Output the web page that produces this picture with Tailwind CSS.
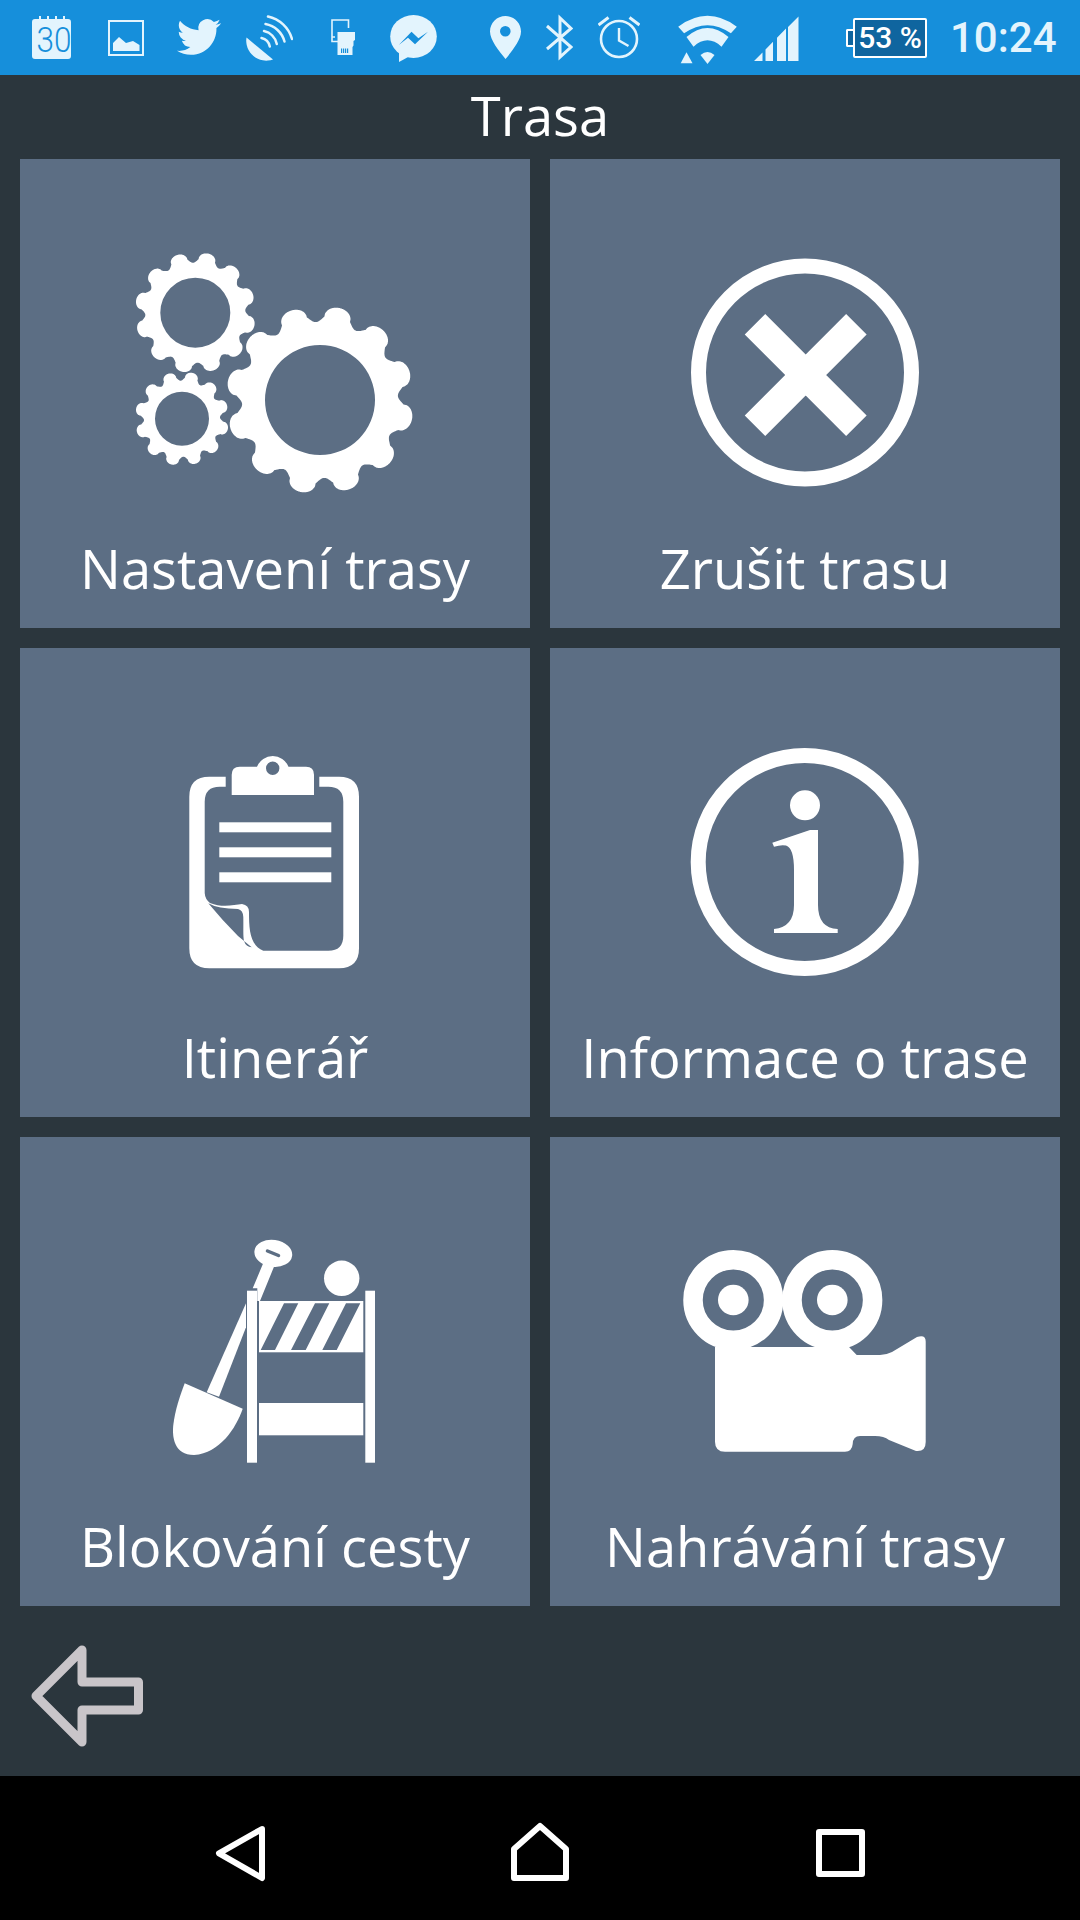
<!DOCTYPE html>
<html lang="cs">
<head>
  <meta charset="UTF-8" />
  <title>Trasa</title>
  <meta name="viewport" content="width=device-width, initial-scale=1.0" />
  <script src="https://cdn.jsdelivr.net/npm/@tailwindcss/browser@4"></script>
</head>
<body class="w-[1080px] h-[1920px] overflow-hidden flex flex-col bg-[#2b363d] text-white font-['Open_Sans',sans-serif]">

  <!-- status bar: svgs use page coordinates in their viewBox -->
  <header class="h-[75px] shrink-0 bg-[#168fdb] flex items-center pl-[32px] text-[#e3f4fd] fill-[#e3f4fd]">
    <svg class="w-[44px] h-[75px]" viewBox="32 0 44 75">
      <path d="M36 19h3v-3h2v3h6v-3h2v3h6v-3h2v3h6v-3h2v3h3q3 0 3 3v34q0 3-3 3H35q-3 0-3-3V22q0-3 3-3z" />
      <text x="54" y="52" text-anchor="middle" font-family="Roboto" font-weight="300" font-size="35" textLength="35" lengthAdjust="spacingAndGlyphs" fill="#168fdb">30</text>
    </svg>
    <svg class="w-[36px] h-[75px] ml-[32px]" viewBox="108 0 36 75">
      <rect x="109" y="21" width="34" height="34" fill="none" stroke="#e3f4fd" stroke-width="2" />
      <path d="M113 51V43L119 37L126 43L133 41L139.500 45V51Z" />
    </svg>
    <svg class="w-[44px] h-[75px] ml-[33px]" viewBox="177 0 44 75">
      <path transform="translate(177 15) scale(1.83)" d="M23.953 4.57a10 10 0 01-2.825.775 4.958 4.958 0 002.163-2.723c-.951.555-2.005.959-3.127 1.184a4.92 4.92 0 00-8.384 4.482C7.69 8.095 4.067 6.13 1.64 3.162a4.822 4.822 0 00-.666 2.475c0 1.71.87 3.213 2.188 4.096a4.904 4.904 0 01-2.228-.616v.06a4.923 4.923 0 003.946 4.827 4.996 4.996 0 01-2.212.085 4.936 4.936 0 004.604 3.417 9.867 9.867 0 01-6.102 2.105c-.39 0-.779-.023-1.17-.067a13.995 13.995 0 007.557 2.209c9.053 0 13.998-7.496 13.998-13.985 0-.21 0-.42-.015-.63A9.935 9.935 0 0024 4.59z" />
    </svg>
    <svg class="w-[47px] h-[75px] ml-[25px]" viewBox="246 0 47 75">
      <path d="M246.500 37.500A20 20 0 0 0 273 59.500Z" />
      <g fill="none" stroke="#e3f4fd" stroke-width="2.500" stroke-linecap="round">
        <path d="M261.500 38A11 11 0 0 1 269.800 46.500" />
        <path d="M264 31A17 17 0 0 1 276.800 44" />
        <path d="M265.500 24A24 24 0 0 1 284.500 41.500" />
        <path d="M268 16.500A32 32 0 0 1 292 39" />
      </g>
    </svg>
    <svg class="w-[24px] h-[75px] ml-[38px]" viewBox="331 0 24 75">
      <path d="M348.500 28V20H332V41.500H338M332 37H335" fill="none" stroke="#e3f4fd" stroke-width="1.600" />
      <path d="M337.500 32H355V40L353.500 41V45.500L352.500 47V55H337.500Z" />
      <path d="M341 48.500h1.200v4.500H341zM343 48.500h1.200v4.500H343zM345 48.500h1.200v4.500H345zM347 48.500h1.200v4.500H347z" fill="#168fdb" />
    </svg>
    <svg class="w-[47px] h-[75px] ml-[35px]" viewBox="390 0 47 75">
      <ellipse cx="413.500" cy="36.500" rx="23.300" ry="21.500" />
      <path d="M399 50V62L410 56Z" />
      <path d="M398.800 45L411.500 31.700L418.400 38.300L428 31.700L415 44.300L408 37.700Z" fill="#168fdb" />
    </svg>
    <svg class="w-[31px] h-[75px] ml-[53px]" viewBox="490 0 31 75">
      <path fill-rule="evenodd" d="M505.500 16C514 16 521 22.800 521 31.500C521 40 512 51 505.500 59C499 51 490 40 490 31.500C490 22.800 497 16 505.500 16ZM505.300 26A5.300 5.300 0 1 0 505.300 36.600A5.300 5.300 0 1 0 505.300 26Z" />
    </svg>
    <svg class="w-[28px] h-[75px] ml-[24px]" viewBox="545 0 28 75">
      <path d="M547 26L571 47L560 57V18L571 28.500L547 49" fill="none" stroke="#e3f4fd" stroke-width="3" />
    </svg>
    <svg class="w-[42px] h-[75px] ml-[25px]" viewBox="597.500 0 42 75">
      <g fill="none" stroke="#e3f4fd">
        <circle cx="618.500" cy="39" r="18" stroke-width="2.600" />
        <path d="M618.500 28V40.500L628 46" stroke-width="2.400" />
        <path d="M598 25L608 17.500M629 17.500L639 25" stroke-width="3" />
      </g>
    </svg>
    <svg class="w-[59px] h-[75px] ml-[38px]" viewBox="677.500 0 59 75">
      <path d="M677.700 26.700Q707 5 736.300 26.700L730.400 33.300Q707 17 683.600 33.300Z" />
      <path d="M686 37Q707 19 728 37L721 46.700Q707 34 693 46.700Z" />
      <path d="M700 55Q707 49 714 55L707 64Z" />
      <path d="M680.200 63.300H692L686 52.300Z" />
    </svg>
    <svg class="w-[45px] h-[75px] ml-[17px]" viewBox="753.500 0 45 75">
      <path d="M753.500 61L762 52.400V61ZM765 49.400L772.500 41.800V61H765ZM776.500 37.700L785.500 28.600V61H776.500ZM787.500 27L798 16.400V61H787.500Z" />
    </svg>
    <div class="relative ml-[54px] w-[74px] h-[40px] border-2 border-white rounded-[2px] bg-[#0f659f] flex items-center justify-center text-white font-['Roboto',sans-serif] font-medium text-[30px] leading-none whitespace-nowrap">
      53 %
      <div class="absolute left-[-9px] top-[9px] w-[7px] h-[18px] border-2 border-r-0 border-white rounded-l-[2px] bg-[#0f659f]"></div>
    </div>
    <div class="ml-[23px] font-['Roboto',sans-serif] text-[42px] leading-none font-medium whitespace-nowrap">10:24</div>
  </header>

  <h1 class="h-[84px] shrink-0 pb-[4px] flex items-center justify-center text-[54.300px] leading-none font-normal">Trasa</h1>

  <main class="grid grid-cols-2 gap-[20px] px-[20px]">
    <!-- Nastavení trasy -->
    <a class="h-[469px] bg-[#5c6e84] flex flex-col items-center">
      <svg class="w-[510px] h-[372px] fill-white" viewBox="20 159 510 372">
        <path fill-rule="evenodd" data-gear="320,400,78,94,55,12" />
        <path fill-rule="evenodd" data-gear="195.300,312.700,50,60.500,35,12.500" />
        <path fill-rule="evenodd" data-gear="182,418.700,38,47,27,13" />
      </svg>
      <span class="text-[54.300px] leading-[74px] whitespace-nowrap">Nastavení trasy</span>
    </a>
    <!-- Zrušit trasu -->
    <a class="h-[469px] bg-[#5c6e84] flex flex-col items-center">
      <svg class="w-[510px] h-[372px]" viewBox="550 159 510 372">
        <circle cx="805" cy="372.500" r="106.500" fill="none" stroke="#fff" stroke-width="15" />
        <path d="M755 324.300L856.400 425.700M856.400 324.300L755 425.700" stroke="#fff" stroke-width="29" />
      </svg>
      <span class="text-[54.300px] leading-[74px] whitespace-nowrap">Zrušit trasu</span>
    </a>
    <!-- Itinerář -->
    <a class="h-[469px] bg-[#5c6e84] flex flex-col items-center">
      <svg class="w-[510px] h-[372px] fill-white" viewBox="20 648 510 372">
        <path fill-rule="evenodd" d="M209.300 776.700H339Q359 776.700 359 796.700V948.300Q359 968.300 339 968.300H209.300Q189.300 968.300 189.300 948.300V796.700Q189.300 776.700 209.300 776.700ZM219.700 786.700Q204.700 786.700 204.700 801.700V893Q205 899 210 903C222 908 234 905 242 904Q249 905 249 912C249 930 250 945 263.300 950.700H328.300Q343.300 950.700 343.300 935.700V801.700Q343.300 786.700 328.300 786.700Z" />
        <path d="M208.300 903.300Q218 909 238 909Q243 910 243.300 917C243.500 930 243 935 244 941Q246 947 251.700 947.300Q244 941 238 936Q222 920 208.300 903.300Z" fill="#5c6e84" />
        <rect x="225.700" y="776" width="93.600" height="11" fill="#5c6e84" />
        <path fill-rule="evenodd" d="M239.700 766.700H257A17 17 0 0 1 288.500 766.700H306Q314 766.700 314 774.700V795H231.700V774.700Q231.700 766.700 239.700 766.700ZM272.700 761.500A6.700 6.700 0 1 0 272.700 774.900A6.700 6.700 0 1 0 272.700 761.500Z" />
        <rect x="219.300" y="822.300" width="112" height="10" />
        <rect x="219.300" y="847.300" width="112" height="10" />
        <rect x="219.300" y="872.300" width="112" height="10" />
      </svg>
      <span class="text-[54.300px] leading-[74px] whitespace-nowrap">Itinerář</span>
    </a>
    <!-- Informace o trase -->
    <a class="h-[469px] bg-[#5c6e84] flex flex-col items-center">
      <svg class="w-[510px] h-[372px] fill-white" viewBox="550 648 510 372">
        <circle cx="804.700" cy="862" r="106.500" fill="none" stroke="#fff" stroke-width="15" />
        <circle cx="805" cy="805.300" r="15" />
        <path d="M772.300 842.700L774 846.700Q781 844.500 786 845.500Q794 848 794 870V905Q794 927 774 929V933H837.700V929Q818 928 818 905V830H810Z" />
      </svg>
      <span class="text-[54.300px] leading-[74px] whitespace-nowrap">Informace o trase</span>
    </a>
    <!-- Blokování cesty -->
    <a class="h-[469px] bg-[#5c6e84] flex flex-col items-center">
      <svg class="w-[510px] h-[372px] fill-white" viewBox="20 1137 510 372">
        <rect x="247" y="1290.700" width="10" height="172" />
        <rect x="365.300" y="1290.700" width="9.700" height="172" />
        <rect x="259" y="1301" width="104.300" height="51.300" />
        <path d="M284 1303.300H298.300L275 1350H260.700ZM315 1303.300H329.300L305.700 1350H291ZM346 1303.300H360.300L336.700 1350H322.300Z" fill="#5c6e84" />
        <rect x="259" y="1403" width="104.300" height="32.300" />
        <circle cx="341.700" cy="1278.300" r="17.700" />
        <ellipse cx="273.300" cy="1253.300" rx="19" ry="13.500" transform="rotate(8 273.300 1253.300)" />
        <path d="M267.500 1251L278.500 1255.500" stroke="#5c6e84" stroke-width="3.500" stroke-linecap="round" />
        <path d="M263.300 1263L274 1266.700L260 1301H257.300V1288.300H252.700Z" />
        <path d="M246 1303.300V1327.300L219 1396.700L206.700 1392.300Z" />
        <path d="M184.700 1383.300L242.700 1408.700C236 1428 220 1453 194 1455C174 1455 172 1437 173.300 1425C175 1410 180 1396 184.700 1383.300Z" />
      </svg>
      <span class="text-[54.300px] leading-[74px] whitespace-nowrap">Blokování cesty</span>
    </a>
    <!-- Nahrávání trasy -->
    <a class="h-[469px] bg-[#5c6e84] flex flex-col items-center">
      <svg class="w-[510px] h-[372px] fill-white" viewBox="550 1137 510 372">
        <path d="M715 1347H849L856.700 1355H880Q886 1355 892 1352L917 1337Q926 1334 925.700 1342V1442Q925.700 1452 916 1451L889 1440Q884 1436 875 1436H860Q853 1436 852.700 1444Q852 1451.700 845 1451.700H725Q715 1451.700 715 1441.700Z" />
        <circle cx="733.300" cy="1300" r="40.300" fill="none" stroke="#fff" stroke-width="19.500" />
        <circle cx="733.300" cy="1300" r="15.300" />
        <circle cx="832.300" cy="1300" r="40.300" fill="none" stroke="#fff" stroke-width="19.500" />
        <circle cx="832.300" cy="1300" r="15.300" />
      </svg>
      <span class="text-[54.300px] leading-[74px] whitespace-nowrap">Nahrávání trasy</span>
    </a>
  </main>

  <footer class="flex-1">
    <svg class="w-[155px] h-[170px]" viewBox="0 1606 155 170">
      <path d="M36 1696L82 1650V1682H138.500V1710H82V1742Z" fill="none" stroke="#c9c5c9" stroke-width="9" stroke-linejoin="round" />
    </svg>
  </footer>

  <nav class="h-[144px] shrink-0 bg-black">
    <svg class="w-[1080px] h-[144px]" viewBox="0 1776 1080 144">
      <g fill="none" stroke="#fff" stroke-width="6" stroke-linejoin="round">
        <path d="M262 1829L219 1853.300L262 1878Z" />
        <path d="M540 1826L566 1849V1878H514V1849Z" />
        <rect x="819" y="1832" width="43" height="42" />
      </g>
    </svg>
  </nav>

  <script>
    // gears: cx, cy, valley radius, tooth radius, hole radius, tooth phase
    // each tooth is a round lobe, each gap a soft concave curve
    document.querySelectorAll("[data-gear]").forEach((el) => {
      const [cx, cy, rv, rt, hole, phase] = el.dataset.gear.split(",").map(Number);
      const step = Math.PI / 6;
      const pts = [];
      for (let i = 0; i < 1440; i++) {
        const a = i * Math.PI / 720;
        const d = a - phase * Math.PI / 180;
        const u = Math.abs(d - Math.round(d / step) * step) / (step / 2);
        const k = u < 0.6
          ? 0.35 + 0.65 * Math.sqrt(1 - (u / 0.6) ** 2)
          : 0.35 * (1 - Math.sin((u - 0.6) / 0.4 * Math.PI / 2));
        const r = rv + (rt - rv) * k;
        pts.push((cx + r * Math.cos(a)).toFixed(1) + " " + (cy + r * Math.sin(a)).toFixed(1));
      }
      el.setAttribute("d", "M" + pts.join("L") + "Z" +
        `M${cx - hole} ${cy}a${hole} ${hole} 0 1 0 ${hole * 2} 0a${hole} ${hole} 0 1 0 ${-hole * 2} 0Z`);
    });
  </script>
</body>
</html>
